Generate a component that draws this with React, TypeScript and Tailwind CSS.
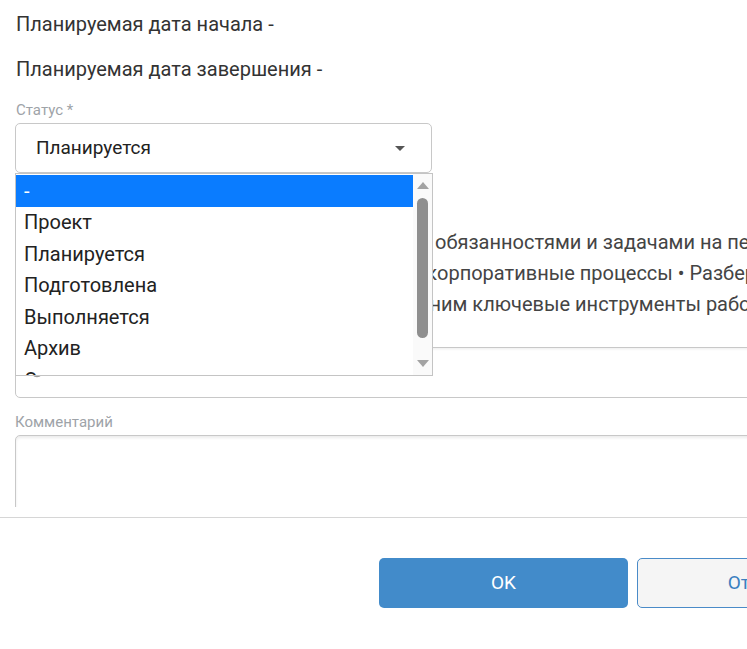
import React from "react";

const options = ["-", "Проект", "Планируется", "Подготовлена", "Выполняется", "Архив", "Отменена"];

function Caret({ className, w = 10, h = 5 }: { className?: string; w?: number; h?: number }) {
  return (
    <svg width={w} height={h} viewBox="0 0 10 5" preserveAspectRatio="none" className={className}>
      <path d="M0 0h10L5 5z" fill="currentColor" />
    </svg>
  );
}

function StatusDropdown() {
  return (
    <div className="absolute left-[15px] top-[173px] w-[418px] h-[203px] bg-white border border-[#c4c4c4] flex overflow-hidden">
      <ul className="flex-1 pt-px">
        {options.map((o, i) => (
          <li
            key={o}
            className={
              "h-[31.5px] pl-[8px] flex items-center text-[20px] leading-none whitespace-nowrap " +
              (i === 0 ? "bg-[#0a7cff] text-white" : "text-[#222]")
            }
          >
            {o}
          </li>
        ))}
      </ul>
      <div className="w-[19px] bg-[#fafafa] flex flex-col items-center pt-[8px] pb-[8px]">
        <Caret className="text-[#a3a3a3] rotate-180" w={12} h={7} />
        <div className="w-[11px] h-[140px] mt-[9px] rounded-full bg-[#8f8f8f]" />
        <div className="flex-1" />
        <Caret className="text-[#a3a3a3]" w={12} h={7} />
      </div>
    </div>
  );
}

export default function App() {
  return (
    <div className="relative w-[747px] h-[649px] bg-white overflow-hidden font-['Roboto',sans-serif]">
      <div className="h-[507px] overflow-hidden pl-[15px]">
        <div className="w-[900px]">
          <p className="pt-[11px] pl-px text-[20px] leading-[26px] text-[#333]">Планируемая дата начала -</p>
          <p className="mt-[19px] pl-px text-[20px] leading-[26px] text-[#333]">Планируемая дата завершения -</p>

          <label className="block mt-[19px] pl-px text-[15px] leading-[18px] text-[#9ea3a8]">Статус *</label>
          <div className="mt-[4px] w-[417px] h-[50px] border border-[#c8c8c8] rounded-[5px] flex items-center justify-between pl-[20px] pr-[26px]">
            <span className="text-[19px] text-[#222]">Планируется</span>
            <Caret className="text-[#555]" />
          </div>

          <label className="block mt-[10px] text-[15px] leading-[18px] text-[#9ea3a8]">Описание</label>
          <div className="mt-[6px]">
            <div className="h-[140px] pt-[20px] text-[20px] leading-[31px] text-[#444] whitespace-pre">
              <div className="flex">
                <span className="w-[420px] overflow-hidden text-right">Ознакомиться с должностными </span>
                <span>обязанностями и задачами на первую неделю</span>
              </div>
              <div className="flex">
                <span className="w-[422px] overflow-hidden text-right">• Изучить внутренние регламенты и к</span>
                <span>орпоративные процессы • Разберёмся</span>
              </div>
              <div className="flex">
                <span className="w-[426px] overflow-hidden text-right">• Вместе с наставником освоим с н</span>
                <span>им ключевые инструменты работы</span>
              </div>
            </div>
            <div className="h-[51px] border border-[#c8c8c8] rounded-b-[5px] shadow-[inset_0_3px_3px_-2px_rgba(0,0,0,0.08)] flex items-center pl-[14px]">
              <svg width="14" height="14" viewBox="0 0 14 14" className="text-[#9a9a9a] -mt-[4px]">
                <circle cx="7" cy="7" r="5.5" fill="none" stroke="currentColor" strokeWidth="1.5" />
              </svg>
            </div>
          </div>

          <label className="block mt-[15px] text-[15px] leading-[18px] text-[#9ea3a8]">Комментарий</label>
          <div className="mt-[4px] h-[120px] border border-[#c8c8c8] rounded-[5px] shadow-[inset_0_2px_3px_rgba(0,0,0,0.08)]" />
        </div>
      </div>

      <div className="mt-[10px] border-t border-[#d6d6d6] pt-[40px] pl-[379px] flex gap-[9px] w-[1000px]">
        <button className="w-[249px] h-[50px] rounded-[5px] bg-[#428bca] text-white text-[19px]">OK</button>
        <button className="w-[249px] h-[50px] rounded-[5px] bg-[#f5f5f5] border border-[#4a8bc8] text-[#3b7fc0] text-[19px]">Отмена</button>
      </div>

      <StatusDropdown />
    </div>
  );
}
